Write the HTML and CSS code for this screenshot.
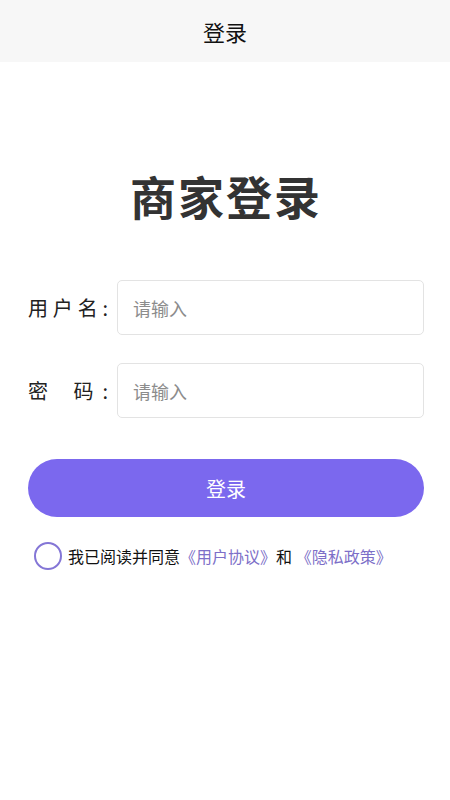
FILE: index.html
```html
<!DOCTYPE html>
<html lang="zh">
<head>
<meta charset="utf-8">
<link rel="stylesheet" href="styles.css">
</head>
<body>
<header class="topbar">登录</header>
<main class="page">
  <h1 class="title">商家登录</h1>
  <div class="row">
    <div class="label"><span>用</span><span>户</span><span>名</span><span>:</span></div>
    <input class="field" type="text" placeholder="请输入">
  </div>
  <div class="row row-second">
    <div class="label"><span>密</span><span>码&nbsp;&nbsp;:</span></div>
    <input class="field" type="password" placeholder="请输入">
  </div>
  <button class="btn">登录</button>
  <div class="agree">
    <span class="check"></span>
    <span class="agree-text">我已阅读并同意<span class="link">《用户协议》</span>和 <span class="link">《隐私政策》</span></span>
  </div>
</main>
</body>
</html>
```
FILE: styles.css
```css
* { box-sizing: border-box; }
body {
  margin: 0;
  background: #fff;
  font-family: "Noto Sans CJK SC", "Noto Sans", sans-serif;
  color: #222;
}
.topbar {
  height: 62px;
  line-height: 62px;
  background: #f7f7f7;
  text-align: center;
  font-size: 22px;
  color: #111;
}
.page {
  padding: 0 26px 0 28px;
}
.title {
  margin: 105px 0 0;
  text-align: center;
  font-size: 46px;
  line-height: 56px;
  font-weight: 700;
  color: #333;
  letter-spacing: 2px;
}
.row {
  display: flex;
  align-items: center;
  margin-top: 57px;
}
.row-second { margin-top: 28px; }
.label {
  width: 80px;
  margin-right: 9px;
  display: flex;
  justify-content: space-between;
  font-size: 20px;
  color: #222;
}
.field {
  flex: 1;
  height: 55px;
  border: 1px solid #e3e3e3;
  border-radius: 5px;
  padding: 0 15px;
  font-family: "Noto Sans CJK SC", "Noto Sans", sans-serif;
  font-size: 18px;
  color: #333;
  outline: none;
  background: #fff;
}
.field::placeholder { color: #8c8c8c; }
.btn {
  display: block;
  width: 100%;
  height: 58px;
  margin-top: 41px;
  border: none;
  border-radius: 29px;
  background: #7b68ee;
  color: #fff;
  font-family: "Noto Sans CJK SC", "Noto Sans", sans-serif;
  font-size: 20px;
}
.agree {
  display: flex;
  align-items: center;
  margin-top: 25px;
  padding-left: 6px;
}
.check {
  width: 28px;
  height: 28px;
  border: 2.5px solid #8476d6;
  border-radius: 50%;
  margin-right: 6px;
  flex: none;
}
.agree-text {
  font-size: 16px;
  color: #111;
}
.link { color: #7d6fc8; }
```
